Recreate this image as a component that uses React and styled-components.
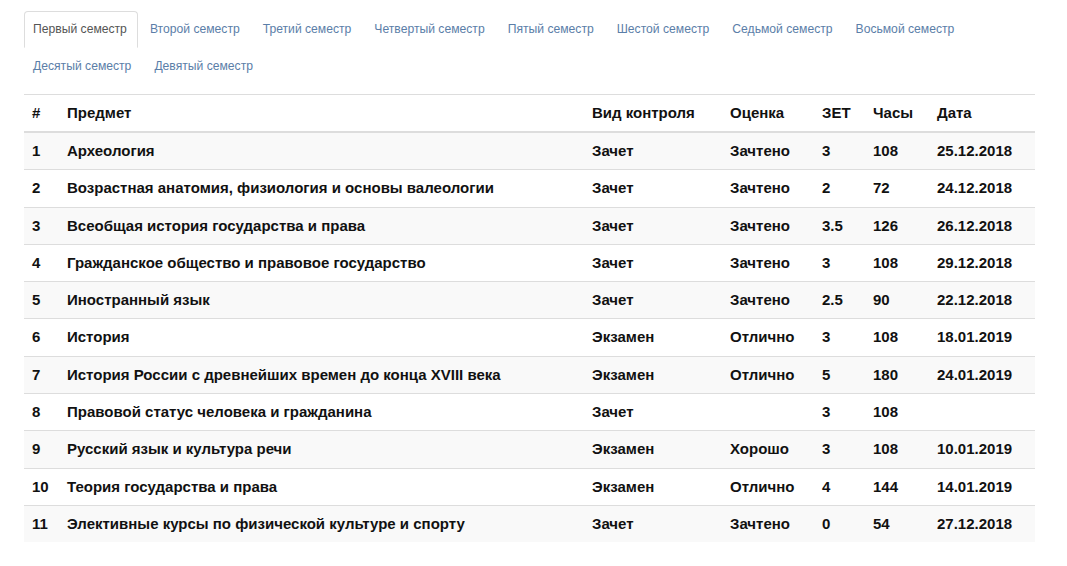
import React, { useState } from "react";
import styled, { createGlobalStyle } from "styled-components";

const GlobalStyle = createGlobalStyle`
  body {
    margin: 0;
    background: #fff;
    font-family: "Liberation Sans", Arial, sans-serif;
    color: #111;
  }
`;

const Page = styled.div`
  width: 1011px;
  padding: 11px 0 0 24px;
`;

const Tabs = styled.ul`
  display: flex;
  flex-wrap: wrap;
  list-style: none;
  margin: 0;
  padding: 0;
  width: 960px;
`;

const Tab = styled.li`
  margin-right: 3px;
  padding: 9px 10px 9px 8px;
  font-size: 12.15px;
  line-height: 17px;
  color: ${(p) => (p.$active ? "#555" : "#5b7ea8")};
  border: 1px solid ${(p) => (p.$active ? "#ddd" : "transparent")};
  border-bottom-color: transparent;
  border-radius: 4px 4px 0 0;
  cursor: pointer;
`;

const Table = styled.table`
  width: 1011px;
  margin-top: 9px;
  border-collapse: collapse;
  border-top: 1px solid #ddd;
  font-size: 15px;
  font-weight: bold;
`;

const Th = styled.th`
  width: ${(p) => p.$w}px;
  padding: 8px;
  line-height: 20px;
  text-align: left;
  border-bottom: 2px solid #ddd;
  box-sizing: border-box;
`;

const Row = styled.tr`
  background: ${(p) => (p.$odd ? "#f9f9f9" : "#fff")};
`;

const Td = styled.td`
  padding: 8px;
  line-height: 20.3px;
  border-top: ${(p) => (p.$first ? "none" : "1px solid #ddd")};
`;

const semesters = [
  "Первый семестр",
  "Второй семестр",
  "Третий семестр",
  "Четвертый семестр",
  "Пятый семестр",
  "Шестой семестр",
  "Седьмой семестр",
  "Восьмой семестр",
  "Десятый семестр",
  "Девятый семестр",
];

const columns = [
  ["#", 35],
  ["Предмет", 525],
  ["Вид контроля", 138],
  ["Оценка", 92],
  ["ЗЕТ", 51],
  ["Часы", 64],
  ["Дата", 106],
];

const rows = [
  ["Археология", "Зачет", "Зачтено", "3", "108", "25.12.2018"],
  ["Возрастная анатомия, физиология и основы валеологии", "Зачет", "Зачтено", "2", "72", "24.12.2018"],
  ["Всеобщая история государства и права", "Зачет", "Зачтено", "3.5", "126", "26.12.2018"],
  ["Гражданское общество и правовое государство", "Зачет", "Зачтено", "3", "108", "29.12.2018"],
  ["Иностранный язык", "Зачет", "Зачтено", "2.5", "90", "22.12.2018"],
  ["История", "Экзамен", "Отлично", "3", "108", "18.01.2019"],
  ["История России с древнейших времен до конца XVIII века", "Экзамен", "Отлично", "5", "180", "24.01.2019"],
  ["Правовой статус человека и гражданина", "Зачет", "", "3", "108", ""],
  ["Русский язык и культура речи", "Экзамен", "Хорошо", "3", "108", "10.01.2019"],
  ["Теория государства и права", "Экзамен", "Отлично", "4", "144", "14.01.2019"],
  ["Элективные курсы по физической культуре и спорту", "Зачет", "Зачтено", "0", "54", "27.12.2018"],
];

export default function App() {
  const [active, setActive] = useState(0);
  return (
    <Page>
      <GlobalStyle />
      <Tabs>
        {semesters.map((s, i) => (
          <Tab key={s} $active={i === active} onClick={() => setActive(i)}>
            {s}
          </Tab>
        ))}
      </Tabs>
      <Table>
        <thead>
          <tr>
            {columns.map(([c, w]) => (
              <Th key={c} $w={w}>
                {c}
              </Th>
            ))}
          </tr>
        </thead>
        <tbody>
          {rows.map((r, i) => (
            <Row key={i} $odd={i % 2 === 0}>
              <Td $first={i === 0}>{i + 1}</Td>
              {r.map((v, j) => (
                <Td key={j} $first={i === 0}>
                  {v}
                </Td>
              ))}
            </Row>
          ))}
        </tbody>
      </Table>
    </Page>
  );
}
